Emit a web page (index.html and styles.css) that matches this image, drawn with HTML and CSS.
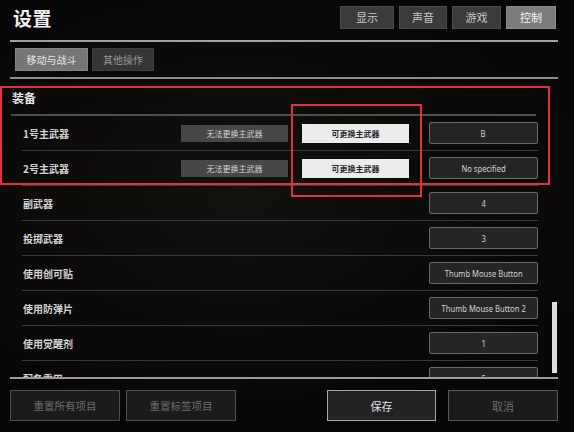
FILE: index.html
```html
<!DOCTYPE html>
<html lang="zh-CN">
<head>
<meta charset="utf-8">
<title>设置</title>
<link rel="stylesheet" href="styles.css">
</head>
<body>
<div class="screen">
  <header class="header">
    <h1 class="title">设置</h1>
    <nav class="tabs">
      <span class="tab tab-w1">显示</span>
      <span class="tab tab-w2">声音</span>
      <span class="tab tab-w3">游戏</span>
      <span class="tab tab-w4 active">控制</span>
    </nav>
  </header>
  <div class="rule"></div>
  <div class="subtabs">
    <span class="subtab subtab-a active">移动与战斗</span>
    <span class="subtab subtab-b">其他操作</span>
  </div>
  <div class="rule rule-2"></div>
  <div class="scroll">
    <div class="content">
      <div class="section-title">装备</div>
      <div class="row">
        <span class="label">1号主武器</span>
        <span class="act act-off">无法更换主武器</span>
        <span class="act act-on">可更换主武器</span>
        <span class="key"><span class="key-text">B</span></span>
      </div>
      <div class="row">
        <span class="label">2号主武器</span>
        <span class="act act-off">无法更换主武器</span>
        <span class="act act-on">可更换主武器</span>
        <span class="key"><span class="key-text">No specified</span></span>
      </div>
      <div class="row">
        <span class="label">副武器</span>
        <span class="key"><span class="key-text">4</span></span>
      </div>
      <div class="row">
        <span class="label">投掷武器</span>
        <span class="key"><span class="key-text">3</span></span>
      </div>
      <div class="row">
        <span class="label">使用创可贴</span>
        <span class="key"><span class="key-text">Thumb Mouse Button</span></span>
      </div>
      <div class="row">
        <span class="label">使用防弹片</span>
        <span class="key"><span class="key-text">Thumb Mouse Button 2</span></span>
      </div>
      <div class="row">
        <span class="label">使用觉醒剂</span>
        <span class="key"><span class="key-text">1</span></span>
      </div>
      <div class="row">
        <span class="label">配备重甲</span>
        <span class="key"><span class="key-text">5</span></span>
      </div>
    </div>
    <div class="scrollbar"><div class="thumb"></div></div>
  </div>
  <div class="rule rule-3"></div>
  <footer class="footer">
    <div class="footer-left">
      <span class="fbtn dim">重置所有项目</span>
      <span class="fbtn dim">重置标签项目</span>
    </div>
    <div class="footer-right">
      <span class="fbtn save">保存</span>
      <span class="fbtn dim cancel">取消</span>
    </div>
  </footer>
  <div class="mark mark-1"></div>
  <div class="mark mark-2"></div>
</div>
</body>
</html>
```

FILE: styles.css
```css
* { box-sizing: border-box; }
html, body {
  margin: 0;
  padding: 0;
  width: 574px;
  height: 432px;
  overflow: hidden;
  background: #060606;
}
.screen {
  position: relative;
  width: 574px;
  height: 432px;
  padding: 0 16px 0 10px;
  font-family: "Noto Sans CJK SC", "Noto Sans", sans-serif;
  color: #d6d6d6;
  background:
    radial-gradient(ellipse 60% 55% at 42% 45%, #141210 0%, #0c0b0a 55%, rgba(6,6,6,0) 100%),
    linear-gradient(180deg, #060606 0%, #0a0908 50%, #070605 100%);
  overflow: hidden;
}
.header {
  height: 40px;
  display: flex;
  align-items: center;
  justify-content: space-between;
  padding: 0 2px 6px 3px;
}
.title {
  margin: 0;
  font-size: 19px;
  font-weight: 700;
  color: #f2f2f2;
  line-height: 1;
  letter-spacing: 0.5px;
}
.tabs {
  display: flex;
  gap: 5px;
}
.tab {
  height: 23px;
  display: flex;
  align-items: center;
  justify-content: center;
  background: #3b3b3b;
  border: 1px solid #4a4a4a;
  color: #c9c9c9;
  font-size: 11px;
}
.tab-w1 { width: 54px; }
.tab-w2 { width: 48px; }
.tab-w3 { width: 49px; }
.tab-w4 { width: 50px; }
.tab.active {
  background: #7c7c7c;
  border-color: #8a8a8a;
  color: #f4f4f4;
}
.rule {
  height: 2px;
  background: #a2a2a2;
}
.rule-2 {
  background: #8c8c8c;
}
.rule-3 {
  background: #9a9a9a;
}
.subtabs {
  display: flex;
  gap: 4px;
  height: 23px;
  margin: 6px 0 6px 5px;
}
.subtab {
  display: flex;
  align-items: center;
  justify-content: center;
  font-size: 10px;
  color: #9a9a9a;
  background: #353535;
  border: 1px solid #3d3d3d;
}
.subtab-a { width: 73px; }
.subtab-b { width: 62px; }
.subtab.active {
  background: #767676;
  border-color: #858585;
  color: #e6e6e6;
}
.scroll {
  height: 298px;
  display: flex;
  overflow: hidden;
}
.content {
  width: 527px;
  margin-left: 1px;
}
.section-title {
  height: 37px;
  display: flex;
  align-items: center;
  padding: 2px 0 0 1px;
  font-size: 12px;
  font-weight: 700;
  color: #e4e4e4;
  border-bottom: 2px solid #4e4e4e;
  margin-right: 2px;
}
.row {
  height: 35px;
  margin-left: 11px;
  padding-left: 1px;
  display: flex;
  align-items: center;
  border-bottom: 1px solid #3a3a3a;
  flex-shrink: 0;
}
.label {
  flex: 1;
  font-size: 10px;
  font-weight: 700;
  color: #d2d2d2;
}
.act {
  width: 107px;
  display: flex;
  align-items: center;
  justify-content: center;
  font-size: 8px;
}
.act-off {
  height: 17px;
  margin-right: 14px;
  background: #474747;
  color: #d4d4d4;
}
.act-on {
  height: 19px;
  margin-right: 20px;
  background: #ececec;
  color: #2a2a2a;
  font-weight: 700;
}
.key {
  width: 109px;
  height: 22px;
  display: flex;
  align-items: center;
  justify-content: center;
  background: #252525;
  border: 1px solid #6a6a6a;
  border-radius: 2px;
  color: #d4d4d4;
  font-family: "Noto Sans", "Open Sans", sans-serif;
  font-size: 9.5px;
  white-space: nowrap;
}
.key-text {
  display: inline-block;
  transform: scaleX(0.8);
}
.scrollbar {
  width: 5px;
  margin-left: 14px;
}
.thumb {
  margin-top: 223px;
  height: 71px;
  background: #dedede;
}
.footer {
  display: flex;
  justify-content: space-between;
  margin-top: 11px;
}
.footer-left, .footer-right {
  display: flex;
}
.footer-left { gap: 6px; }
.footer-right { gap: 12px; }
.fbtn {
  width: 110px;
  height: 31px;
  display: flex;
  align-items: center;
  justify-content: center;
  font-size: 10.5px;
  background: #1b1b1b;
  border: 1px solid #4e4e4e;
}
.fbtn.dim {
  color: #6c6c6c;
}
.fbtn.save {
  width: 109px;
  color: #e2e2e2;
  background: #232323;
  border-color: #a5a5a5;
  font-size: 11px;
}
.fbtn.cancel {
  font-size: 11px;
  border-color: #5a5a5a;
}
.mark {
  position: absolute;
  border: 2px solid #e0323c;
  pointer-events: none;
}
.mark-1 {
  left: 0;
  top: 86px;
  width: 550px;
  height: 99px;
}
.mark-2 {
  left: 291px;
  top: 104px;
  width: 131px;
  height: 93px;
}
```
